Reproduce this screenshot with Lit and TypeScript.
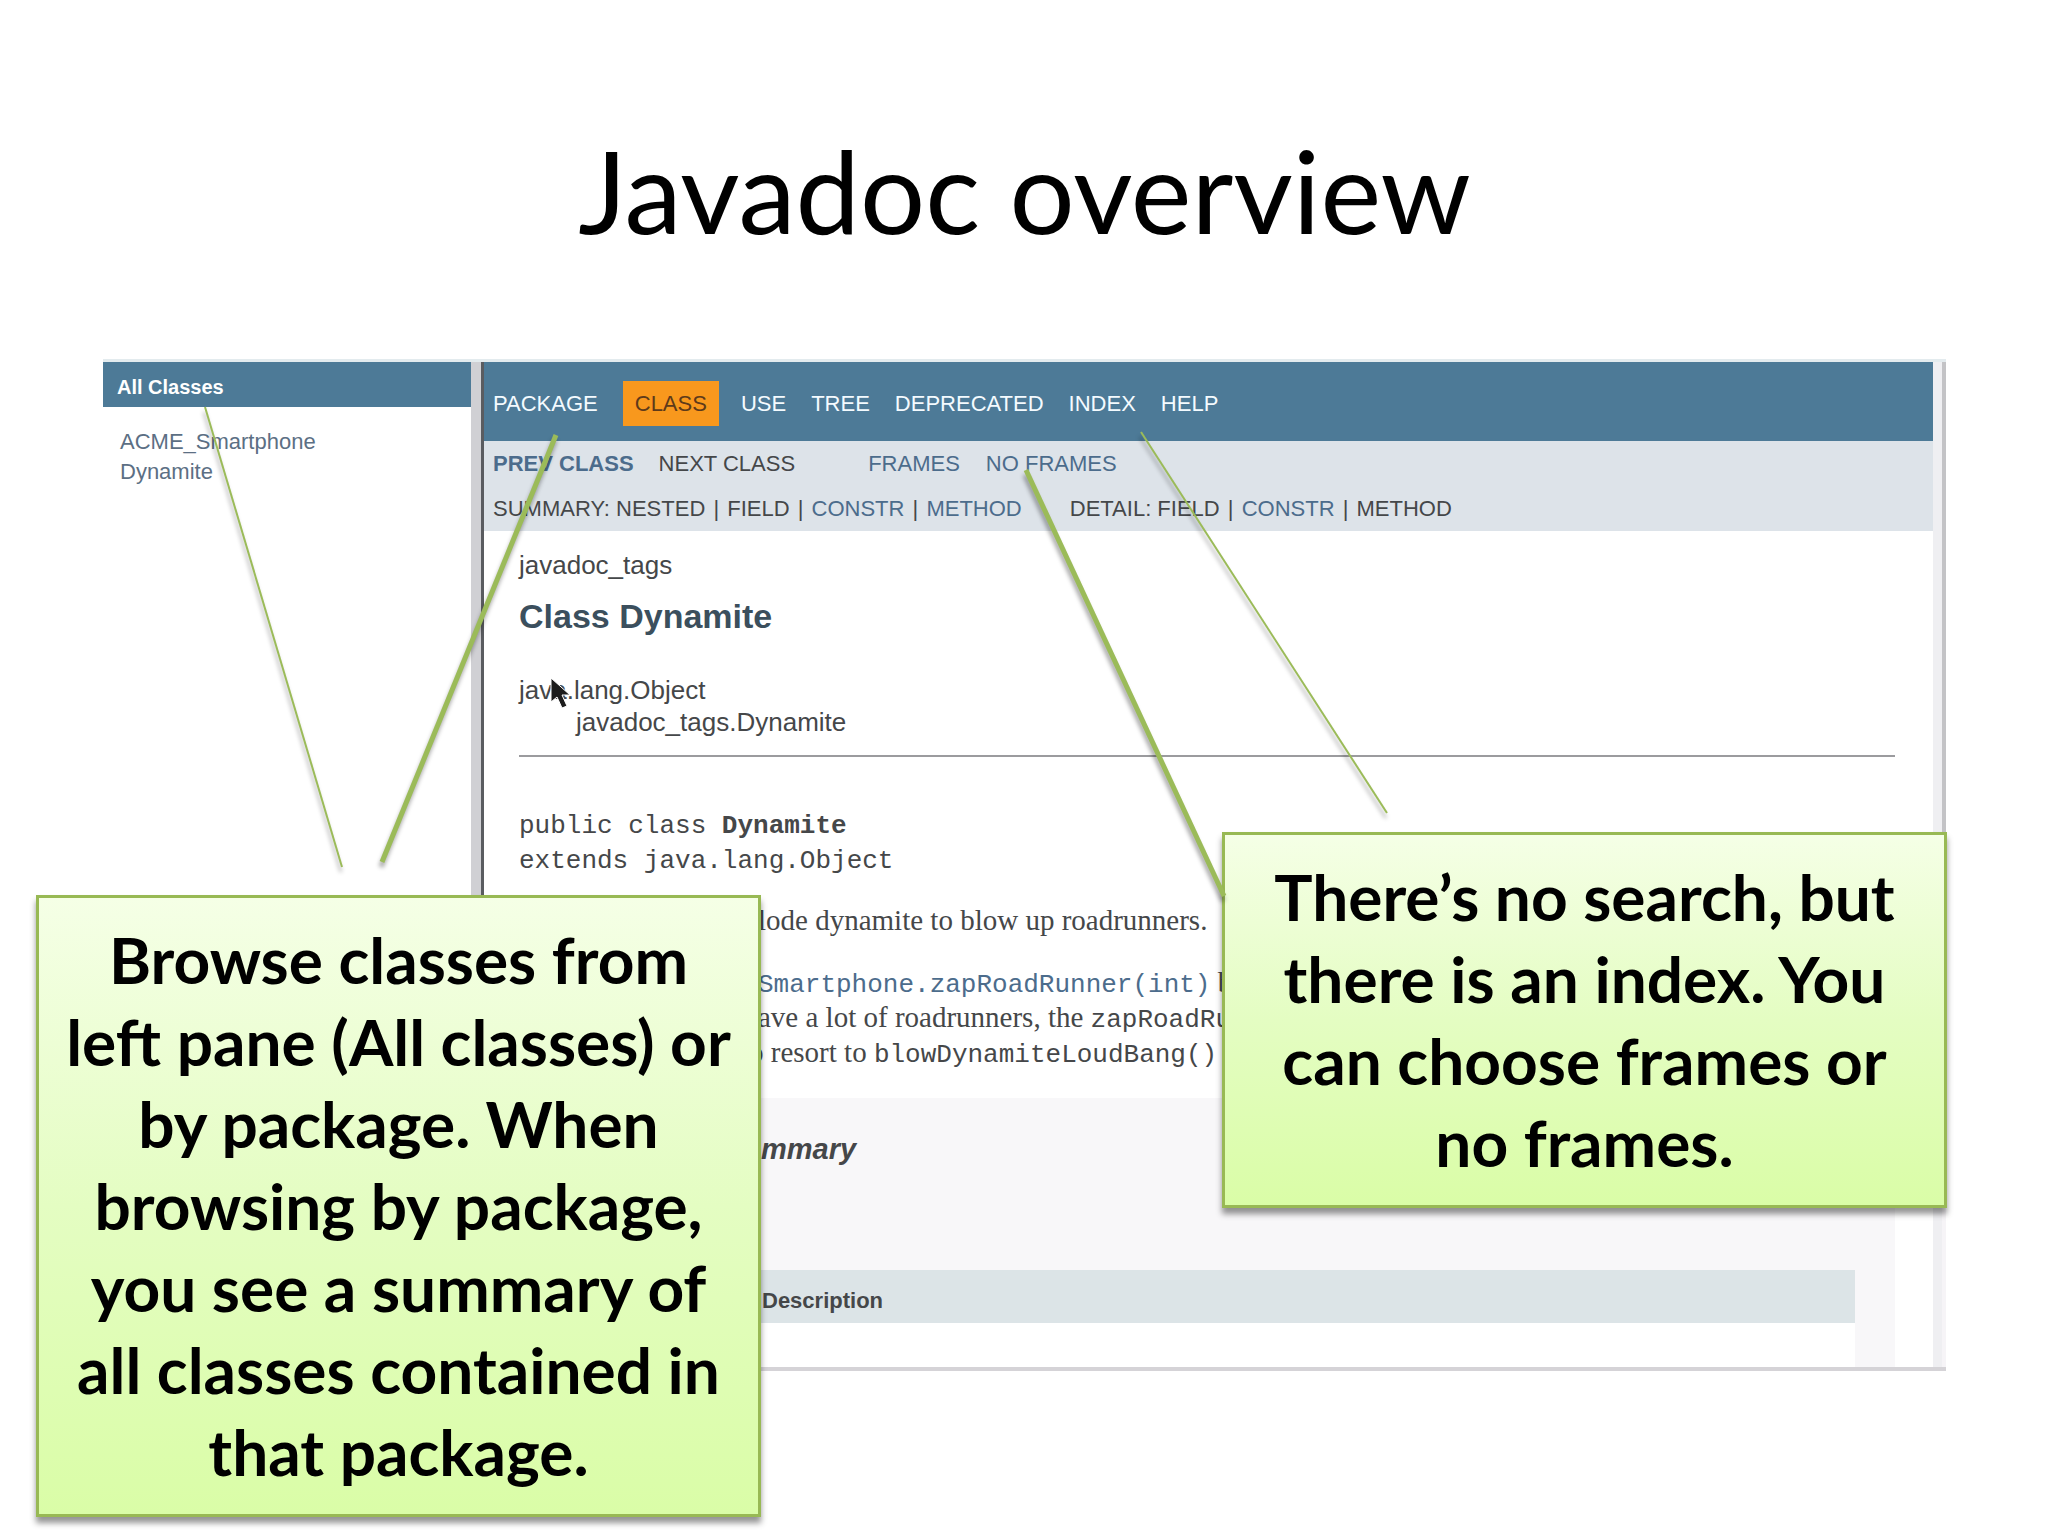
import { LitElement, html, css, svg } from "lit";
import { customElement } from "lit/decorators.js";

interface NavItem {
  label: string;
  active?: boolean;
}

const NAV: NavItem[] = [
  { label: "PACKAGE" },
  { label: "CLASS", active: true },
  { label: "USE" },
  { label: "TREE" },
  { label: "DEPRECATED" },
  { label: "INDEX" },
  { label: "HELP" },
];

const CLASSES = ["ACME_Smartphone", "Dynamite"];

const POINTERS = [
  { x1: 205, y1: 407, x2: 342, y2: 867, w: 2 },
  { x1: 556, y1: 435, x2: 382, y2: 862, w: 5 },
  { x1: 1026, y1: 470, x2: 1224, y2: 896, w: 5 },
  { x1: 1141, y1: 432, x2: 1387, y2: 813, w: 2 },
];

@customElement("javadoc-frames")
export class JavadocFrames extends LitElement {
  static styles = css`
    :host {
      display: block;
      font-family: "Liberation Sans", Arial, sans-serif;
      font-size: 22px;
      color: #454749;
    }
    a {
      color: #4c6c8c;
      text-decoration: none;
    }
    .window {
      display: flex;
      border-top: 3px solid #e3ebee;
      border-bottom: 4px solid #d5d3d7;
    }
    .sidebar {
      flex: 0 0 368px;
    }
    .sidebar-title {
      margin: 0;
      padding: 6px 14px 0;
      background: #4d7a97;
      color: #ffffff;
      font-size: 20px;
      line-height: 39px;
    }
    .class-list {
      list-style: none;
      margin: 0;
      padding: 20px 17px;
      line-height: 30px;
    }
    .class-list a {
      color: #5c6f84;
    }
    .divider {
      flex: 0 0 10px;
      background: #d0d0d4;
      border-right: 3px solid #5a5c60;
    }
    .doc {
      flex: 1;
      min-width: 0;
    }
    .edge {
      flex: 0 0 13px;
      background:
        linear-gradient(#c3c3c6 84%, #f6f4f7 84%) right / 4px 100% no-repeat,
        #efeff2;
    }
    .topnav {
      display: flex;
      gap: 25px;
      padding: 19px 9px 15px;
      background: #4d7a97;
      line-height: 45px;
    }
    .topnav a {
      color: #f4fbff;
    }
    .topnav .active {
      padding: 0 12px;
      margin-right: -3px;
      background: #f8981d;
      color: #5e3a1a;
    }
    .subnav {
      padding: 0 9px;
      background: #dde3e9;
      line-height: 45px;
    }
    .subrow {
      display: flex;
      white-space: pre;
    }
    .subrow .next {
      margin: 0 73px 0 25px;
    }
    .subrow .noframes {
      margin-left: 26px;
    }
    .subrow .detail {
      margin-left: 48px;
    }
    .bar {
      padding: 0 2px;
    }
    .body {
      padding: 19px 38px 0 35px;
    }
    .package,
    .tree {
      font-size: 26px;
      line-height: 30px;
    }
    .name {
      margin: 16px 0 38px;
      font-size: 34px;
      line-height: 40px;
      color: #3b4f5d;
    }
    .tree {
      margin: 0;
      padding: 0;
      list-style: none;
      line-height: 32px;
    }
    .tree ul {
      list-style: none;
      margin: 0;
      padding-left: 57px;
    }
    .rule {
      margin: 17px 0 52px;
      border: 0;
      height: 2px;
      background: #9b9b9e;
    }
    .signature {
      margin: 0 0 24px;
      font-family: "Liberation Mono", "Courier New", monospace;
      font-size: 26px;
      line-height: 35px;
    }
    .text {
      margin: 0;
      padding-left: 239px;
      font-family: "Liberation Serif", Georgia, serif;
      font-size: 29px;
      line-height: 35px;
      white-space: nowrap;
      overflow: hidden;
    }
    .lead {
      margin-bottom: 27px;
    }
    .outdent {
      padding-left: 222px;
    }
    .text code {
      font-family: "Liberation Mono", "Courier New", monospace;
      font-size: 26px;
      line-height: 1;
    }
    .summary {
      margin-top: 28px;
      padding: 31px 40px 0 0;
      background: #f8f7f9;
    }
    .summary-title {
      margin: 0 0 101px;
      padding-left: 242px;
      font-size: 29px;
      font-style: italic;
      line-height: 40px;
    }
    .members {
      width: 100%;
      border-collapse: collapse;
    }
    .members th {
      box-sizing: border-box;
      padding: 8px 0 0 243px;
      height: 53px;
      background: #dce4e7;
      text-align: left;
    }
    .members td {
      padding: 0;
      height: 44px;
      background: #ffffff;
    }
  `;

  render() {
    const bar = html`<span class="bar">|</span>`;
    return html`
      <div class="window">
        <aside class="sidebar">
          <h2 class="sidebar-title">All Classes</h2>
          <ul class="class-list">
            ${CLASSES.map((c) => html`<li><a href="#${c}">${c}</a></li>`)}
          </ul>
        </aside>
        <div class="divider"></div>
        <div class="doc">
          <nav class="topnav">
            ${NAV.map(
              (n) =>
                html`<a class=${n.active ? "active" : "item"} href="#${n.label}">${n.label}</a>`
            )}
          </nav>
          <div class="subnav">
            <div class="subrow">
              <a href="#prev"><b>PREV CLASS</b></a>
              <span class="next">NEXT CLASS</span>
              <a href="#frames">FRAMES</a>
              <a class="noframes" href="#noframes">NO FRAMES</a>
            </div>
            <div class="subrow">
              <span>SUMMARY: NESTED ${bar} FIELD ${bar} <a href="#constr">CONSTR</a> ${bar} <a href="#method">METHOD</a></span>
              <span class="detail">DETAIL: FIELD ${bar} <a href="#constr-detail">CONSTR</a> ${bar} METHOD</span>
            </div>
          </div>
          <main class="body">
            <div class="package">javadoc_tags</div>
            <h1 class="name">Class Dynamite</h1>
            <ul class="tree">
              <li>java.lang.Object
                <ul><li>javadoc_tags.Dynamite</li></ul>
              </li>
            </ul>
            <hr class="rule" />
            <div class="signature">public class <b>Dynamite</b><br />extends java.lang.Object</div>
            <p class="text lead">lode dynamite to blow up roadrunners.</p>
            <p class="text"><a href="#zap"><code>Smartphone.zapRoadRunner(int)</code></a> b</p>
            <p class="text">ave a lot of roadrunners, the <code>zapRoadRu</code></p>
            <p class="text outdent">to resort to <code>blowDynamiteLoudBang()</code></p>
            <section class="summary">
              <h2 class="summary-title">mmary</h2>
              <table class="members">
                <thead><tr><th scope="col">Description</th></tr></thead>
                <tbody><tr><td></td></tr></tbody>
              </table>
            </section>
          </main>
        </div>
        <div class="edge"></div>
      </div>
    `;
  }
}

@customElement("app-root")
export class AppRoot extends LitElement {
  static styles = css`
    :host {
      display: block;
      background: #ffffff;
    }
    .slide {
      position: relative;
      min-height: 100vh;
      box-sizing: border-box;
      padding: 0 102px 0 103px;
      overflow: hidden;
      font-family: Lato, Carlito, sans-serif;
      color: #000000;
    }
    .title {
      margin: 0;
      padding: 109px 0 90px;
      font-size: 115px;
      font-weight: 400;
      line-height: 160px;
      text-align: center;
    }
    .pointers {
      position: absolute;
      left: 0;
      top: 0;
      width: 100%;
      height: 100%;
      pointer-events: none;
    }
    .pointer {
      stroke: #9bbb59;
      filter: drop-shadow(-1px 5px 2px rgba(0, 0, 0, 0.35));
    }
    .callout {
      position: absolute;
      box-sizing: border-box;
      width: 725px;
      margin: 0;
      padding: 21px 0;
      border: 3px solid #98b954;
      background: linear-gradient(#f5ffe6, #e4fdc2 50%, #dafda7);
      box-shadow: 0 6px 6px rgba(0, 0, 0, 0.42);
      font-size: 64px;
      font-weight: 700;
      line-height: 82px;
      text-align: center;
      white-space: nowrap;
    }
    .browse {
      left: 36px;
      top: 895px;
    }
    .search {
      left: 1222px;
      top: 832px;
    }
  `;

  render() {
    return html`
      <div class="slide">
        <h1 class="title">Javadoc overview</h1>
        <javadoc-frames></javadoc-frames>
        <p class="callout browse">
          Browse classes from<br />left pane (All classes) or<br />by package. When<br />browsing by package,<br />you see a summary of<br />all classes contained in<br />that package.
        </p>
        <p class="callout search">
          There’s no search, but<br />there is an index. You<br />can choose frames or<br />no frames.
        </p>
        <svg class="pointers" aria-hidden="true">
          <path d="M551 678 L551 702 L557 697 L562 708 L567 706 L562 695 L570 695 Z" fill="#1c1c1c" stroke="#ffffff" stroke-width="1" />
          ${POINTERS.map(
            (p) =>
              svg`<line class="pointer" x1=${p.x1} y1=${p.y1} x2=${p.x2} y2=${p.y2} stroke-width=${p.w} />`
          )}
        </svg>
      </div>
    `;
  }
}
